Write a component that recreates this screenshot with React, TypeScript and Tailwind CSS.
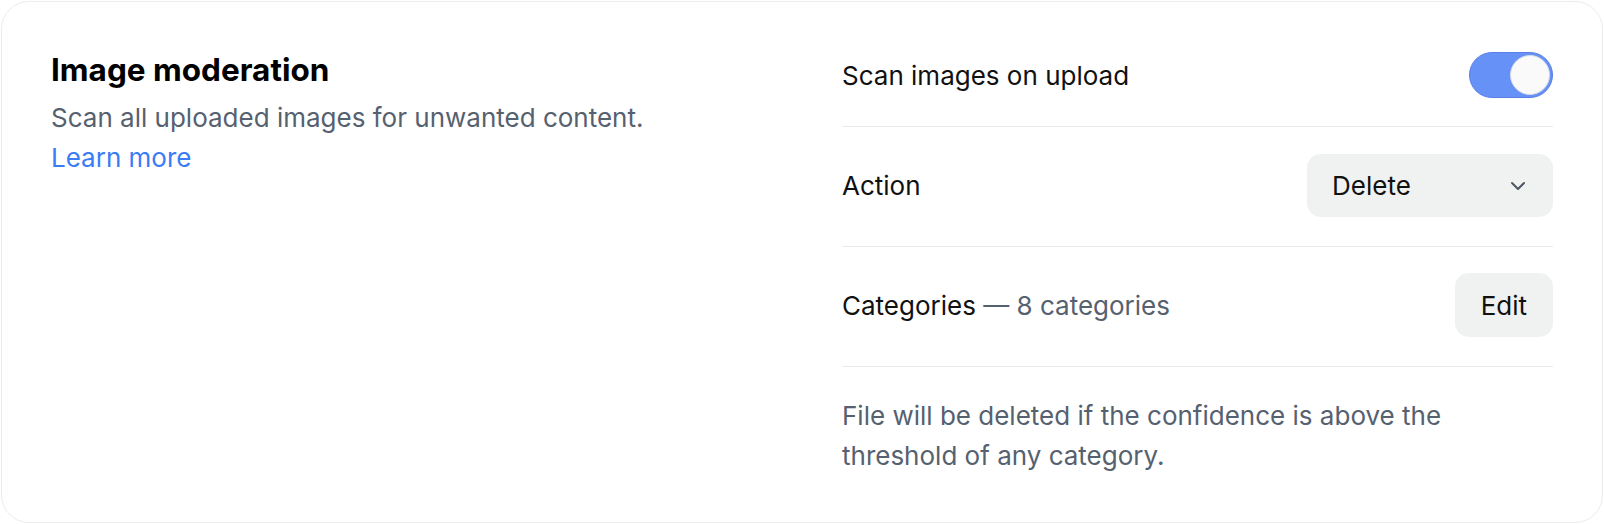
import { ChevronDown } from "lucide-react";

export default function App() {
  return (
    <div className="min-h-screen bg-white p-px font-['Inter','Liberation_Sans',sans-serif]">
      <section className="grid grid-cols-2 gap-20 rounded-[28px] border border-[#ececec] bg-white px-[49px] pt-[50px] pb-[46px]">
        <div>
          <h2 className="text-[31.5px] leading-[36px] font-bold text-black">Image moderation</h2>
          <p className="mt-[10px] text-[26px] leading-[40px] text-[#566170]">
            Scan all uploaded images for unwanted content.
          </p>
          <a href="#" className="text-[26px] leading-[40px] text-[#3b7cf6]">
            Learn more
          </a>
        </div>

        <div className="flex flex-col text-[26px] text-[#111]">
          <div className="flex items-center justify-between border-b border-[#e9eaeb] pb-[28px]">
            <span>Scan images on upload</span>
            <button className="flex h-[46px] w-[84px] items-center justify-end rounded-full border border-[#5a80e6] bg-[#6691f6] p-[2px]">
              <span className="h-[40px] w-[40px] rounded-full border border-[#d8dce4] bg-[#fafafa]" />
            </button>
          </div>

          <div className="flex items-center justify-between border-b border-[#e9eaeb] pt-[27px] pb-[29px]">
            <span>Action</span>
            <button className="flex h-[63px] w-[246px] items-center justify-between rounded-[14px] bg-[#f0f1f1] pr-[23px] pl-[25px] text-[#111]">
              <span>Delete</span>
              <ChevronDown className="h-[24px] w-[24px] text-[#4b5563]" strokeWidth={2} />
            </button>
          </div>

          <div className="flex items-center justify-between border-b border-[#e9eaeb] pt-[26px] pb-[29px]">
            <span>
              Categories <span className="text-[#566170]">— 8 categories</span>
            </span>
            <button className="h-[64px] rounded-[14px] bg-[#f0f1f1] px-[26px] text-[#111]">Edit</button>
          </div>

          <p className="pt-[29px] text-[26px] leading-[40px] text-[#566170]">
            File will be deleted if the confidence is above the threshold of any category.
          </p>
        </div>
      </section>
    </div>
  );
}
